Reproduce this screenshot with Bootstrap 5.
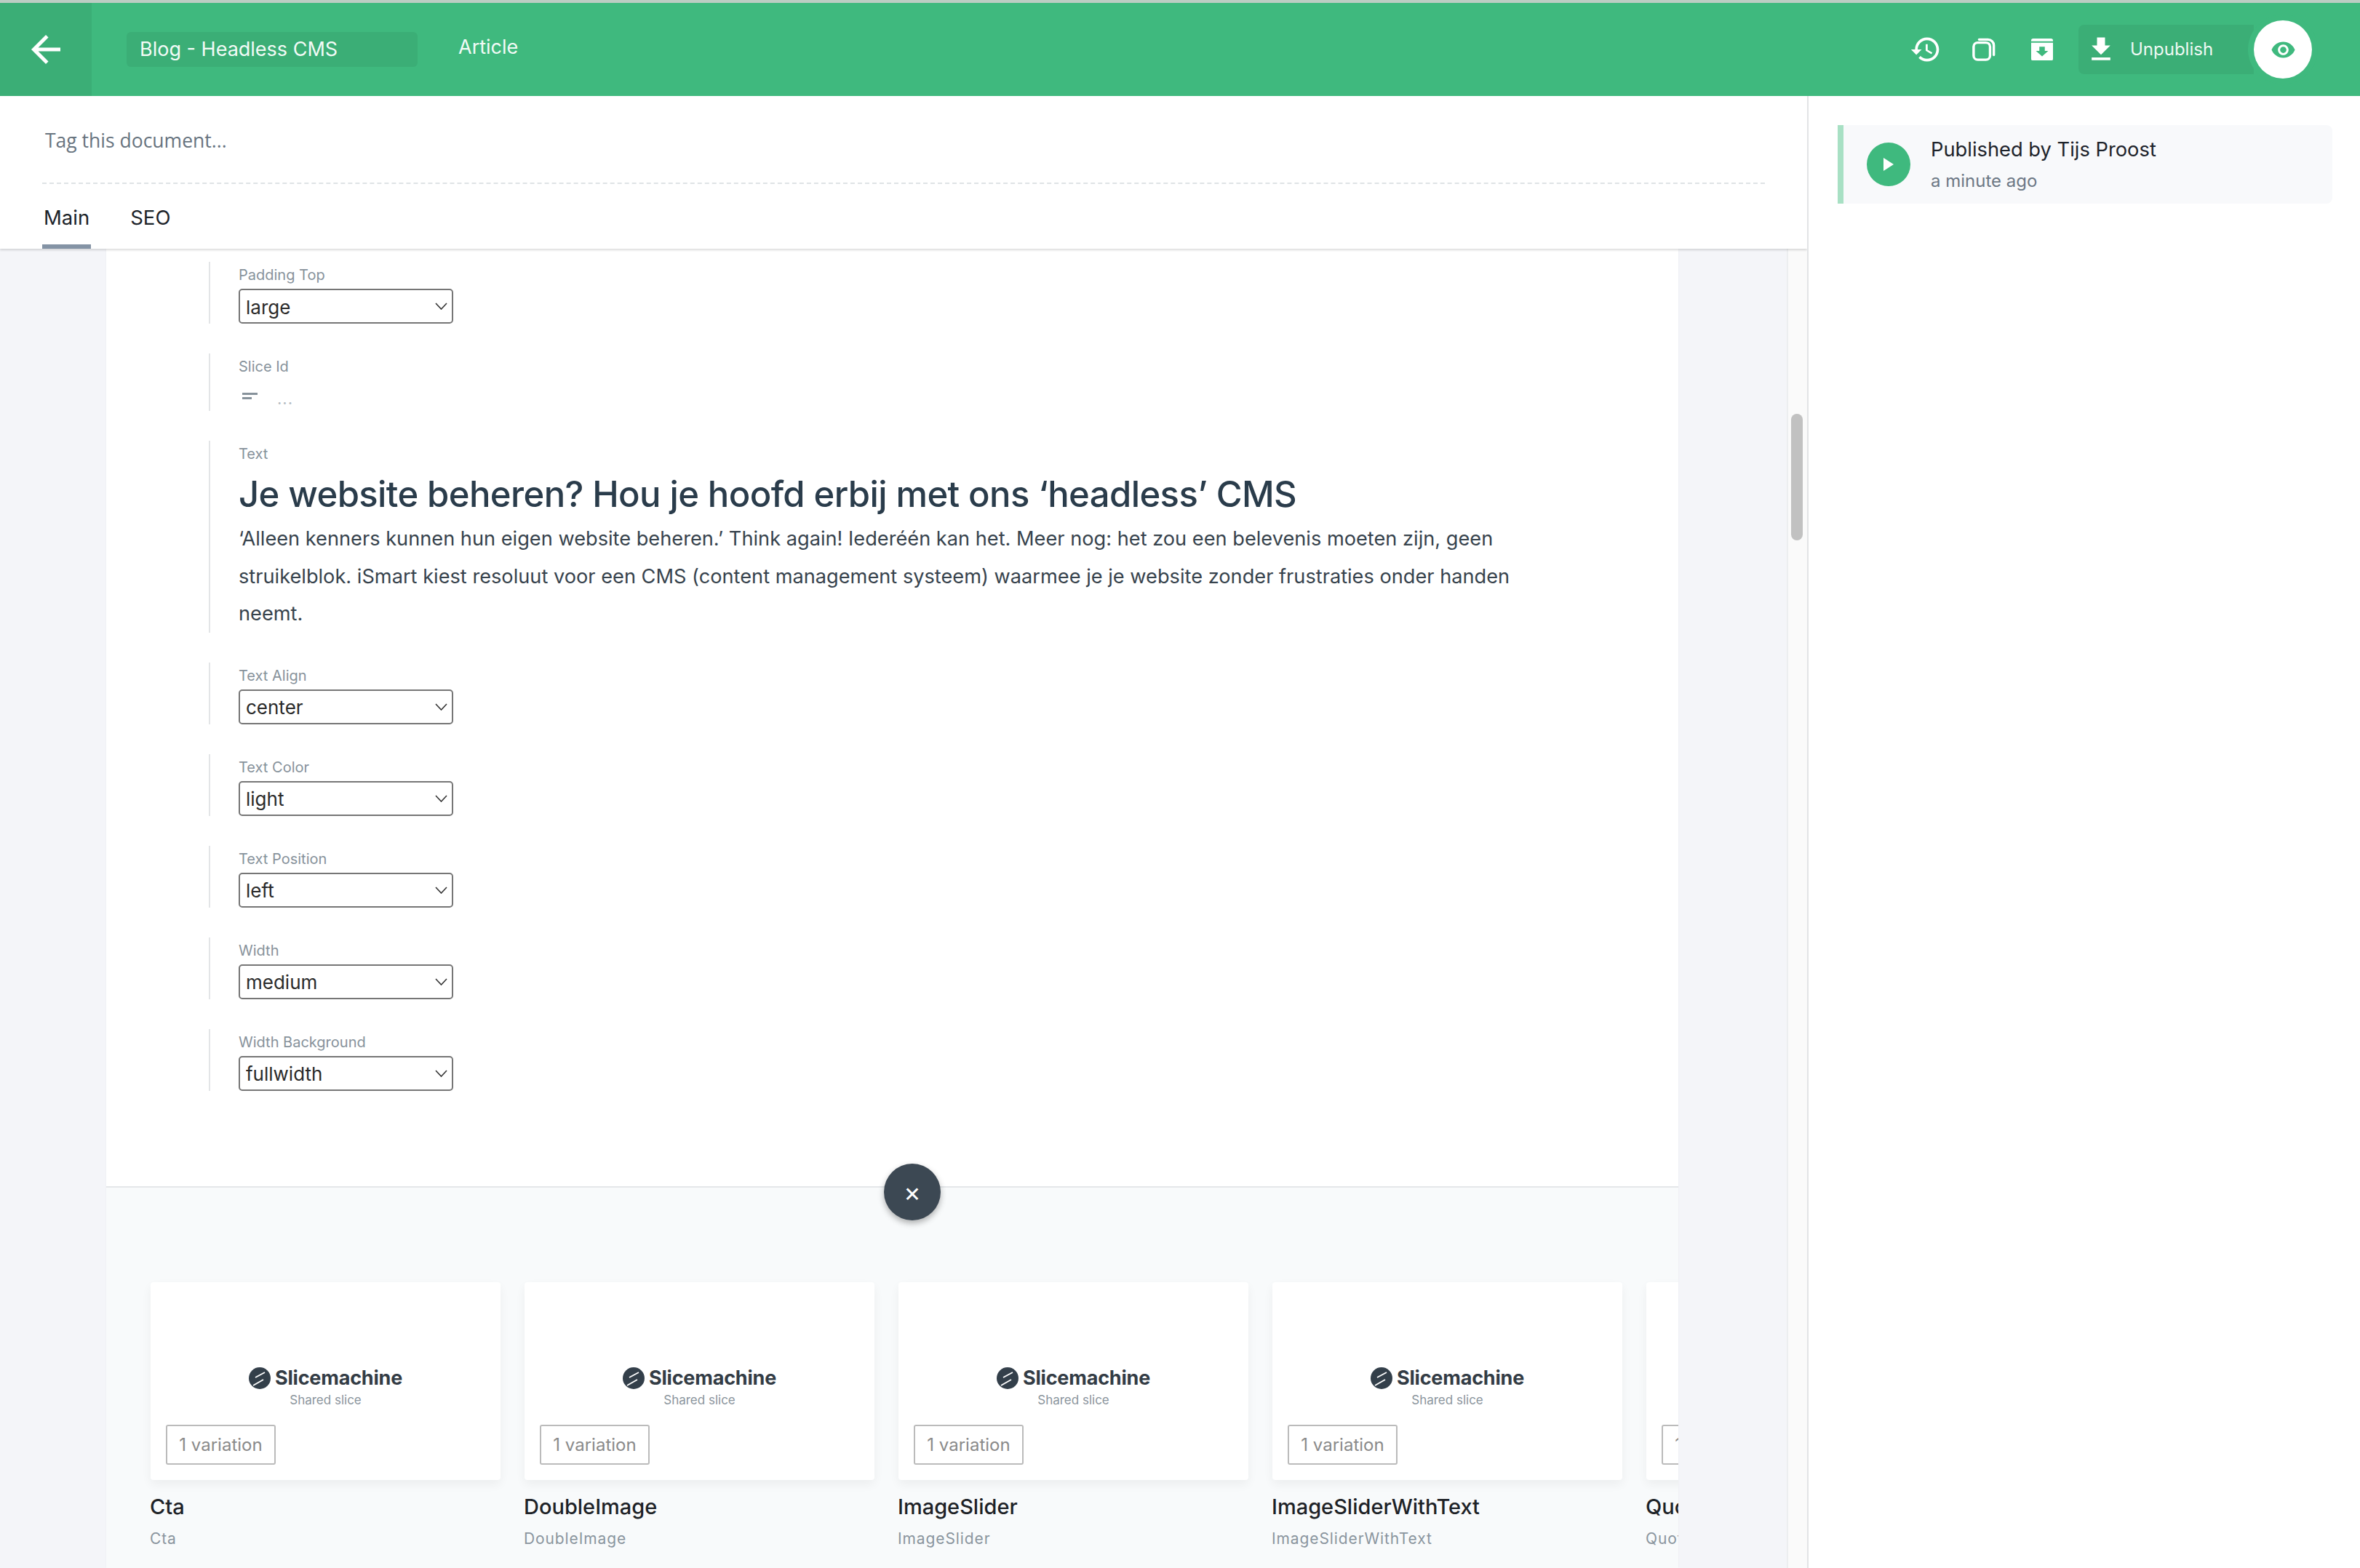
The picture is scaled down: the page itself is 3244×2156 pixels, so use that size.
<!DOCTYPE html>
<html lang="en">
<head>
    <meta charset="UTF-8">
    <meta name="viewport" content="width=device-width, initial-scale=1.0">
    <title>Blog - Headless CMS</title>
    <link href="https://cdn.jsdelivr.net/npm/bootstrap@5.3.0/dist/css/bootstrap.min.css" rel="stylesheet">
    <style>
        html, body { height: 2156px; overflow: hidden; }
        body { font-family: Inter, "Liberation Sans", sans-serif; background: #fff; color: #25313b; }

        .top-line { height: 4px; background: #bccdc3; }
        .top-bar { height: 128px; background: #3fb97e; color: #fff; }
        .back-btn { width: 126px; height: 128px; background: #3bae76; }
        .title-box { width: 400px; height: 48px; margin-left: 48px; padding-left: 18px; background: #3bae76; border-radius: 6px; font-size: 27px; line-height: 48px; color: #f2fbf6; }
        .type-name { margin-left: 56px; margin-bottom: 6px; font-size: 27px; color: #f2fbf6; }
        .tool-btn { width: 80px; height: 80px; }
        .unpub-btn { width: 241px; height: 68px; margin-left: 10px; padding-left: 9px; background: #3bae76; border-radius: 8px 0 0 8px; font-size: 24px; color: #eef9f3; }
        .unpub-btn span { margin-left: 18px; }
        .eye-btn { width: 80px; height: 80px; margin-right: 66px; background: #fff; border-radius: 50%; box-shadow: 0 0 0 8px #3fb97e; position: relative; }

        .main-row { height: 2024px; }
        .doc-col { width: 2486px; border-right: 2px solid #e2e4e6; overflow: hidden; }
        .doc-head { height: 210px; padding: 0 58px; background: #fff; box-shadow: 0 2px 3px rgba(0, 0, 0, .14); position: relative; z-index: 2; }
        .tag-line { height: 121px; padding: 41px 0 0 4px; border-bottom: 2px dashed #dfe3e6; font-family: "Open Sans", sans-serif; font-size: 26.5px; line-height: 40px; color: #68747f; }
        .doc-tabs .nav-link { height: 89px; margin-right: 52px; padding: 26px 2px 0; border-bottom: 6px solid transparent; font-size: 27.5px; line-height: 40px; color: #1c2329; }
        .doc-tabs .nav-link.active { border-bottom-color: #8493a5; }

        .doc-body { height: 1814px; background: #f4f5f9; }
        .sheet { width: 2161px; margin-left: 146px; background: #fff; position: relative; overflow: hidden; box-shadow: 0 0 2px rgba(0, 0, 0, .05); }
        .gutter-bar { width: 28px; margin-left: auto; background: #fafafa; border-left: 2px solid #eceef0; position: relative; }
        .gutter-thumb { position: absolute; left: 4px; top: 227px; width: 16px; height: 174px; background: #c1c1c1; border-radius: 8px; }

        .fields { height: 1289px; padding: 18px 0 0 141px; }
        .fld { margin-bottom: 41px; padding-left: 39px; border-left: 2px solid #e3e5e7; }
        .fld-label { height: 37px; font-size: 20px; line-height: 36px; color: #87929b; }
        .fld .form-select { width: 295px; height: 48px; padding: 2px 30px 0 8px; border: 2px solid #767676; border-radius: 5px; font-size: 26px; color: #2a2a2a; background-size: 17px 10px; background-position: right 6px center; background-image: url("data:image/svg+xml,%3csvg xmlns='http://www.w3.org/2000/svg' viewBox='0 0 17 10'%3e%3cpath fill='none' stroke='%23333' stroke-width='1.6' d='M1 1l7.5 8L16 1'/%3e%3c/svg%3e"); }
        .uid-row { height: 42px; }
        .uid-icon { margin-top: 3px; }
        .uid-dots { margin-left: 25px; font-size: 22px; line-height: 30px; margin-top: 10px; color: #b4bcc3; letter-spacing: 1px; }
        .rich-head { height: 60px; margin: 7px 0 5px; font-size: 49px; font-weight: 500; line-height: 60px; letter-spacing: -.6px; color: #2a3c4b; white-space: nowrap; }
        .rich-text { width: 1770px; margin: 0; font-size: 27.2px; line-height: 51.5px; color: #37434d; }

        .picker { height: 600px; padding: 130px 0 0 61px; background: #f8fafb; border-top: 2px solid #e4e7ea; }
        .close-btn { position: absolute; left: 1069px; top: 1258px; width: 78px; height: 78px; background: #3c4853; border-radius: 50%; color: #fff; font-size: 36px; box-shadow: 0 4px 8px rgba(0, 0, 0, .3); z-index: 3; }
        .slice-item { flex: 0 0 481px; margin-right: 33px; }
        .slice-card { height: 272px; padding: 117px 0 0; border: 0; border-radius: 4px; background: #fff; box-shadow: 0 6px 14px rgba(0, 0, 0, .05); }
        .sm-logo { height: 30px; gap: 6px; font-size: 27px; font-weight: 700; line-height: 30px; letter-spacing: -.2px; color: #333c45; }
        .sm-shared { margin-top: 3px; height: 24px; font-size: 17px; line-height: 24px; color: #8b959d; text-align: center; }
        .var-tag { display: inline-block; width: 151px; height: 55px; margin: 22px 0 0 21px; border: 2px solid #bbb; border-radius: 3px; font-size: 24px; line-height: 51px; color: #8a8a8a; text-align: center; white-space: nowrap; }
        .slice-name { margin: 17px 0 0 -1px; font-size: 29px; font-weight: 500; line-height: 40px; color: #1d2227; white-space: nowrap; }
        .slice-sub { margin: 9px 0 0 -1px; font-size: 21px; line-height: 30px; letter-spacing: .9px; color: #8a959e; white-space: nowrap; }

        .side-col { flex: 1; padding: 40px 38px 0 40px; }
        .pub-note { height: 108px; padding-left: 32px; background: #f8f9fb; border-left: 8px solid #a8e0c4; border-radius: 0 8px 8px 0; }
        .pub-dot { width: 60px; height: 60px; background: #3fb97e; border-radius: 50%; }
        .pub-who { font-size: 27.3px; line-height: 40px; color: #1e242b; }
        .pub-when { margin-top: 5px; font-size: 24px; line-height: 36px; color: #6d7885; }
    </style>
</head>
<body>
    <div class="top-line"></div>
    <header class="top-bar d-flex align-items-center">
        <div class="back-btn d-flex align-items-center justify-content-center">
            <svg width="60" height="60" viewBox="0 0 24 24" fill="#fff"><path d="M20 11H7.83l5.59-5.59L12 4l-8 8 8 8 1.41-1.41L7.83 13H20v-2z"/></svg>
        </div>
        <div class="title-box">Blog - Headless CMS</div>
        <div class="type-name">Article</div>
        <div class="ms-auto d-flex align-items-center">
            <div class="tool-btn d-flex align-items-center justify-content-center">
                <svg width="44" height="44" viewBox="0 0 24 24" fill="#fff"><path d="M13 3c-4.97 0-9 4.03-9 9H1l3.89 3.89.07.14L9 12H6c0-3.87 3.13-7 7-7s7 3.13 7 7-3.13 7-7 7c-1.93 0-3.68-.79-4.94-2.06l-1.42 1.42C8.27 19.99 10.51 21 13 21c4.97 0 9-4.03 9-9s-4.03-9-9-9zm-1 5v5l4.28 2.54.72-1.21-3.5-2.08V8H12z"/></svg>
            </div>
            <div class="tool-btn d-flex align-items-center justify-content-center">
                <svg width="32" height="32" viewBox="0 0 34 34" fill="none" stroke="#fff" stroke-width="3.6"><rect x="2" y="7" width="24" height="25" rx="6"/><path d="M10 2.500h13a8.500 8.500 0 0 1 8.500 8.500v14" stroke-linecap="round"/></svg>
            </div>
            <div class="tool-btn d-flex align-items-center justify-content-center">
                <svg width="30" height="30" viewBox="0 0 32 32"><path fill="#fff" d="M3 0h26a3 3 0 0 1 3 3v1H0V3a3 3 0 0 1 3-3zM0 6h32v24a2 2 0 0 1-2 2H2a2 2 0 0 1-2-2z"/><path fill="#3fb97e" d="M12 12h8v6h5l-9 8-9-8h5z"/></svg>
            </div>
            <div class="unpub-btn d-flex align-items-center">
                <svg width="44" height="44" viewBox="0 0 24 24" fill="#fff"><path d="M19 9h-4V3H9v6H5l7 7 7-7zM5 18v2h14v-2H5z"/></svg>
                <span>Unpublish</span>
            </div>
            <div class="eye-btn d-flex align-items-center justify-content-center">
                <svg width="35" height="35" viewBox="0 0 24 24" fill="#3fb97e"><path d="M12 4.500C7 4.500 2.730 7.610 1 12c1.730 4.390 6 7.500 11 7.500s9.270-3.110 11-7.500c-1.730-4.390-6-7.500-11-7.500zM12 17c-2.760 0-5-2.240-5-5s2.240-5 5-5 5 2.240 5 5-2.240 5-5 5zm0-8c-1.660 0-3 1.340-3 3s1.340 3 3 3 3-1.340 3-3-1.340-3-3-3z"/></svg>
            </div>
        </div>
    </header>

    <div class="main-row d-flex">
        <div class="doc-col">
            <div class="doc-head">
                <div class="tag-line">Tag this document...</div>
                <ul class="nav doc-tabs">
                    <li class="nav-item"><a class="nav-link active" href="#">Main</a></li>
                    <li class="nav-item"><a class="nav-link" href="#">SEO</a></li>
                </ul>
            </div>
            <div class="doc-body d-flex">
                <div class="sheet">
                    <div class="fields">
                        <div class="fld">
                            <div class="fld-label">Padding Top</div>
                            <select class="form-select"><option>large</option></select>
                        </div>
                        <div class="fld">
                            <div class="fld-label">Slice Id</div>
                            <div class="uid-row d-flex align-items-start">
                                <svg class="ms-1 uid-icon" width="24" height="26" viewBox="0 0 24 26" fill="#87929b"><rect x="1" y="14" width="21" height="3"/><rect x="1" y="20" width="13" height="3"/></svg>
                                <div class="uid-dots">...</div>
                            </div>
                        </div>
                        <div class="fld">
                            <div class="fld-label">Text</div>
                            <div class="rich-head">Je website beheren? Hou je hoofd erbij met ons ‘headless’ CMS</div>
                            <p class="rich-text">‘Alleen kenners kunnen hun eigen website beheren.’ Think again! Iederéén kan het. Meer nog: het zou een belevenis moeten zijn, geen struikelblok. iSmart kiest resoluut voor een CMS (content management systeem) waarmee je je website zonder frustraties onder handen neemt.</p>
                        </div>
                        <div class="fld">
                            <div class="fld-label">Text Align</div>
                            <select class="form-select"><option>center</option></select>
                        </div>
                        <div class="fld">
                            <div class="fld-label">Text Color</div>
                            <select class="form-select"><option>light</option></select>
                        </div>
                        <div class="fld">
                            <div class="fld-label">Text Position</div>
                            <select class="form-select"><option>left</option></select>
                        </div>
                        <div class="fld">
                            <div class="fld-label">Width</div>
                            <select class="form-select"><option>medium</option></select>
                        </div>
                        <div class="fld">
                            <div class="fld-label">Width Background</div>
                            <select class="form-select"><option>fullwidth</option></select>
                        </div>
                    </div>
                    <div class="close-btn d-flex align-items-center justify-content-center">×</div>
                    <div class="picker d-flex" id="picker"></div>
                </div>
                <div class="gutter-bar"><div class="gutter-thumb"></div></div>
            </div>
        </div>
        <aside class="side-col">
            <div class="pub-note d-flex align-items-center">
                <div class="pub-dot d-flex align-items-center justify-content-center">
                    <svg width="16" height="20" viewBox="0 0 16 20" fill="#fff"><path d="M1 1l14 9-14 9z"/></svg>
                </div>
                <div class="ms-4 ps-1">
                    <div class="pub-who">Published by Tijs Proost</div>
                    <div class="pub-when">a minute ago</div>
                </div>
            </div>
        </aside>
    </div>

    <script>
        const slices = [
            { name: "Cta" },
            { name: "DoubleImage" },
            { name: "ImageSlider" },
            { name: "ImageSliderWithText" },
            { name: "Quote" }
        ];
        const logo = `<svg width="30" height="30" viewBox="0 0 30 30"><circle cx="15" cy="15" r="15" fill="#333f4a"/><path d="M9 14L22 7M6 25l14-8" stroke="#fff" stroke-width="1.800" fill="none"/></svg>`;
        document.getElementById("picker").innerHTML = slices.map(s => `
            <div class="slice-item">
                <div class="card slice-card">
                    <div class="sm-logo d-flex justify-content-center align-items-center">${logo}<span>Slicemachine</span></div>
                    <div class="sm-shared">Shared slice</div>
                    <div><span class="var-tag">1 variation</span></div>
                </div>
                <div class="slice-name">${s.name}</div>
                <div class="slice-sub">${s.name}</div>
            </div>`).join("");
    </script>
    <script src="https://cdn.jsdelivr.net/npm/bootstrap@5.3.0/dist/js/bootstrap.bundle.min.js"></script>
</body>
</html>
